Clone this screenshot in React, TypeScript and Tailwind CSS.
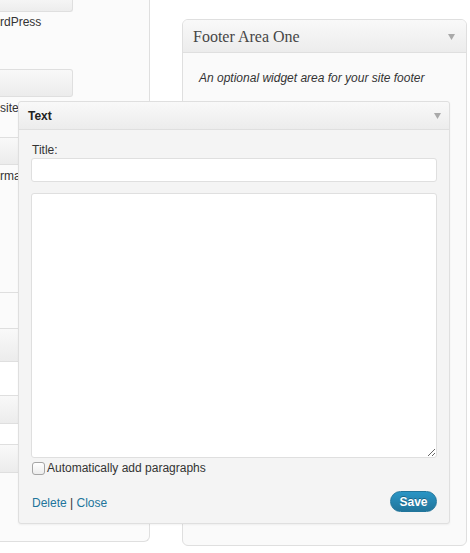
import React from 'react';

const Arrow = () => (
  <svg width="7" height="6" viewBox="0 0 7 6" className="shrink-0">
    <path d="M0 0h7L3.5 6z" fill="#a9a9a9" />
  </svg>
);

const App: React.FC = () => {
  return (
    <div className="relative w-[470px] h-[553px] overflow-hidden bg-white text-[#333] font-['Liberation_Sans',Arial,sans-serif]">
      <div className="flex items-start">
        {/* Left column: available widgets + other sidebars */}
        <div className="w-[150px] h-[542px] shrink-0 flex flex-col bg-[#fbfbfb] border-r border-b border-[#dfdfdf] rounded-br-[6px]">
          <div className="h-[293px] shrink-0 flex flex-col border-b border-[#dfdfdf]">
            <div className="w-[73px] h-[12px] shrink-0 border-r border-b border-[#dfdfdf] rounded-br-[3px] bg-gradient-to-b from-[#f5f5f5] to-[#ededed]" />
            <p className="mt-[3px] text-[12px] leading-[14px] whitespace-nowrap">rdPress</p>
            <div className="mt-[40px] w-[73px] h-[28px] shrink-0 border-r border-y border-[#dfdfdf] rounded-r-[3px] bg-gradient-to-b from-[#f9f9f9] to-[#ececec]" />
            <p className="mt-[4px] text-[12px] leading-[14px] whitespace-nowrap">site</p>
            <div className="mt-[22px] w-[73px] h-[28px] shrink-0 border-r border-y border-[#dfdfdf] rounded-r-[3px] bg-gradient-to-b from-[#f9f9f9] to-[#ececec]" />
            <p className="mt-[4px] text-[12px] leading-[14px] whitespace-nowrap">rmation</p>
          </div>
          <div className="h-[35px] shrink-0" />
          <div className="h-[34px] shrink-0 border-y border-[#dfdfdf] bg-gradient-to-b from-[#f9f9f9] to-[#ececec]" />
          <div className="h-[33px] shrink-0 bg-white" />
          <div className="h-[29px] shrink-0 border-y border-[#dfdfdf] bg-gradient-to-b from-[#f9f9f9] to-[#ececec]" />
          <div className="h-[20px] shrink-0 bg-white" />
          <div className="h-[29px] shrink-0 border-y border-[#dfdfdf] bg-gradient-to-b from-[#f9f9f9] to-[#ececec]" />
        </div>

        {/* Footer Area One sidebar */}
        <div className="ml-[32px] mt-[19px] w-[285px] h-[527px] shrink-0 border border-[#dfdfdf] rounded-[6px] bg-[#fafafa] overflow-hidden">
          <div className="h-[33px] flex items-center justify-between pl-[10px] pr-[11px] pt-[2px] border-b border-[#dfdfdf] bg-gradient-to-b from-[#f9f9f9] to-[#ececec]">
            <span className="font-['Liberation_Serif',Georgia,serif] text-[16px] text-[#464646]">Footer Area One</span>
            <Arrow />
          </div>
          <p className="pl-[16px] pt-[18px] text-[12px] leading-[14px] italic text-[#333]">
            An optional widget area for your site footer
          </p>
        </div>
      </div>

      {/* Text widget being dragged over the sidebars */}
      <div className="absolute left-[18px] top-[101px] w-[432px] h-[423px] flex flex-col border border-[#dfdfdf] rounded-[3px] bg-[#f4f4f4] shadow-[0_1px_2px_rgba(0,0,0,0.05)]">
        <div className="h-[28px] shrink-0 flex items-center justify-between pl-[9px] pr-[8px] border-b border-[#dfdfdf] bg-gradient-to-b from-[#f9f9f9] to-[#ececec] rounded-t-[3px]">
          <span className="text-[12px] font-bold text-[#222]">Text</span>
          <Arrow />
        </div>
        <div className="flex flex-col px-[12px] pt-[13px]">
          <label className="text-[12px] leading-[14px] pl-[1px]">Title:</label>
          <input
            type="text"
            className="mt-[1px] h-[24px] w-full border border-[#dfdfdf] rounded-[3px] bg-white outline-none"
          />
          <textarea className="mt-[11px] h-[265px] w-full border border-[#dfdfdf] rounded-[3px] bg-white outline-none" />
          <label className="mt-[3px] h-[14px] flex items-center gap-[2px] pl-[1px] text-[12px] leading-[14px]">
            <input
              type="checkbox"
              className="appearance-none w-[13px] h-[13px] border border-[#a5a5a5] rounded-[3px] bg-gradient-to-b from-white to-[#ececec]"
            />
            Automatically add paragraphs
          </label>
          <div className="mt-[16px] h-[21px] flex items-center justify-between">
            <div className="pl-[1px] pt-[3px] text-[12px] leading-[14px]">
              <a className="text-[#21759b]">Delete</a>
              <span className="text-[#333]"> | </span>
              <a className="text-[#21759b]">Close</a>
            </div>
            <button className="w-[47px] h-[21px] rounded-full border border-[#21759b] bg-gradient-to-b from-[#2a95c5] to-[#21759b] text-white text-[12px] font-bold leading-none [text-shadow:0_-1px_0_rgba(0,0,0,0.3)]">
              Save
            </button>
          </div>
        </div>
      </div>
    </div>
  );
};

export default App;
